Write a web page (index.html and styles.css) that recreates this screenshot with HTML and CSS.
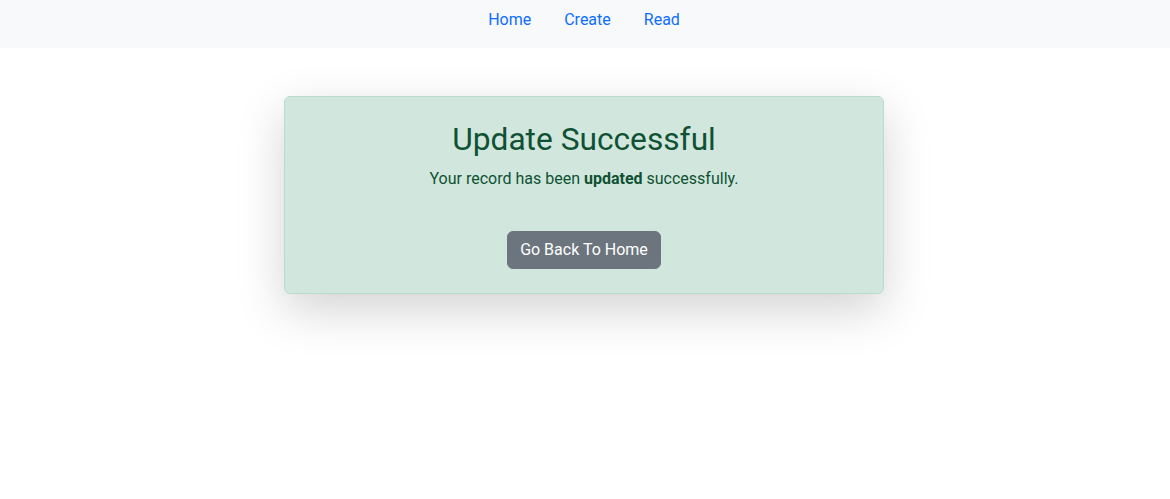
FILE: index.html
```html
<!DOCTYPE html>
<html lang="en">
<head>
<meta charset="utf-8">
<title>Update Successful</title>
<link rel="stylesheet" href="styles.css">
</head>
<body>
<nav class="navbar">
  <a class="nav-link" href="#">Home</a>
  <a class="nav-link" href="#">Create</a>
  <a class="nav-link" href="#">Read</a>
</nav>
<main class="container">
  <div class="alert">
    <h2 class="alert-heading">Update Successful</h2>
    <p class="alert-text">Your record has been <strong>updated</strong> successfully.</p>
    <a class="btn" href="#">Go Back To Home</a>
  </div>
</main>
</body>
</html>
```
FILE: styles.css
```css
* { box-sizing: border-box; }
html, body { min-height: 100vh; }
body {
  margin: 0;
  font-family: Roboto, "Noto Sans", sans-serif;
  font-size: 16px;
  line-height: 1.5;
  color: #212529;
  background: #fff;
}
.navbar {
  height: 48px;
  background: #f8f9fa;
  display: flex;
  justify-content: center;
  align-items: flex-start;
  gap: 33px;
  padding-top: 8px;
  padding-right: 2px;
}
.nav-link {
  color: #0d6efd;
  text-decoration: none;
  line-height: 24px;
}
.container {
  display: flex;
  justify-content: center;
  padding-top: 48px;
  padding-bottom: 80px;
  padding-right: 2px;
}
.alert {
  width: 600px;
  background: #d1e7dd;
  border: 1px solid #badbcc;
  border-radius: 6px;
  color: #0f5132;
  padding: 24px;
  text-align: center;
  box-shadow: 0 16px 48px rgba(0, 0, 0, 0.175);
  display: flex;
  flex-direction: column;
  align-items: center;
}
.alert-heading {
  margin: 0 0 8px;
  font-size: 31.7px;
  font-weight: 400;
  line-height: 1.2;
}
.alert-text {
  margin: 0 0 40px;
}
.alert-text strong { font-weight: 700; }
.btn {
  display: inline-block;
  background: #6c757d;
  border: 1px solid #6c757d;
  color: #fff;
  text-decoration: none;
  padding: 6px 12px;
  border-radius: 6px;
  line-height: 24px;
}
```
